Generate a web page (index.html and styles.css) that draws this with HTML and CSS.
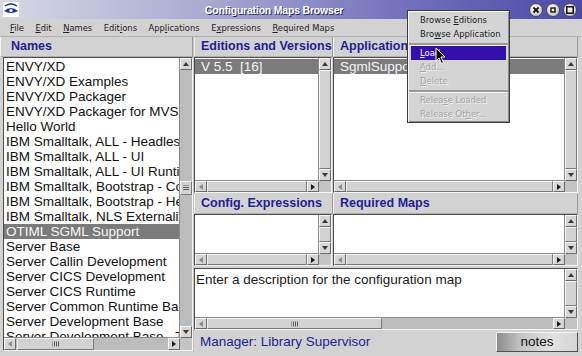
FILE: index.html
```html
<!DOCTYPE html>
<html lang="en">
<head>
    <meta charset="UTF-8">
    <title>Configuration Maps Browser</title>
    <link rel="stylesheet" href="styles.css">
</head>
<body>
    <div class="window">
        <div class="titlebar">
            <svg class="app-icon" width="16" height="15" viewBox="0 0 16 15">
                <rect x="0" y="0" width="16" height="15" fill="#ffffff"/>
                <path d="M2 4 Q8 0 14 4" stroke="#1c3a8c" stroke-width="1.4" fill="none"/>
                <path d="M1 9 Q8 3 15 9 Q8 13 1 9Z" fill="#1c3a8c"/>
                <circle cx="8" cy="8.5" r="1.6" fill="#ffffff"/>
            </svg>
            <div class="title">Configuration Maps Browser</div>
            <div class="winbtns">
                <span class="wbtn"><svg width="12" height="12" viewBox="0 0 12 12"><path d="M3.5 3.5 L8.5 8.5 M8.5 3.5 L3.5 8.5" stroke="#111" stroke-width="1.8"/></svg></span>
                <span class="wbtn"><svg width="12" height="12" viewBox="0 0 12 12"><rect x="4" y="4" width="4" height="4" fill="none" stroke="#111" stroke-width="1.4"/></svg></span>
                <span class="wbtn"><svg width="12" height="12" viewBox="0 0 12 12"><rect x="2.8" y="2.8" width="6.4" height="6.4" fill="none" stroke="#111" stroke-width="1.5"/></svg></span>
            </div>
        </div>

        <div class="menubar">
            <span><u>F</u>ile</span>
            <span><u>E</u>dit</span>
            <span><u>N</u>ames</span>
            <span>Edit<u>i</u>ons</span>
            <span>App<u>l</u>ications</span>
            <span>E<u>x</u>pressions</span>
            <span><u>R</u>equired Maps</span>
        </div>

        <div class="body">
            <div class="names">
                <div class="hdr">Names</div>
                <div class="pane">
                    <div class="list names-list">
                        <div class="row">ENVY/XD</div>
                        <div class="row">ENVY/XD Examples</div>
                        <div class="row">ENVY/XD Packager</div>
                        <div class="row">ENVY/XD Packager for MVS</div>
                        <div class="row">Hello World</div>
                        <div class="row">IBM Smalltalk, ALL - Headless</div>
                        <div class="row">IBM Smalltalk, ALL - UI</div>
                        <div class="row">IBM Smalltalk, ALL - UI Runtime</div>
                        <div class="row">IBM Smalltalk, Bootstrap - Common</div>
                        <div class="row">IBM Smalltalk, Bootstrap - Headless</div>
                        <div class="row">IBM Smalltalk, NLS Externalization</div>
                        <div class="row sel">OTIML SGML Support</div>
                        <div class="row">Server Base</div>
                        <div class="row">Server Callin Development</div>
                        <div class="row">Server CICS Development</div>
                        <div class="row">Server CICS Runtime</div>
                        <div class="row">Server Common Runtime Base</div>
                        <div class="row">Server Development Base</div>
                        <div class="row">Server Development Base - Tools</div>
                    </div>
                    <div class="vs">
                        <span class="btn up"></span>
                        <span class="trough"><span class="thumb grip" style="margin-top:111px;height:14px"></span></span>
                        <span class="btn down"></span>
                    </div>
                    <div class="hs">
                        <span class="btn left"></span>
                        <span class="trough"><span class="thumb grip" style="margin-left:1px;width:77px"></span></span>
                        <span class="btn right"></span>
                    </div>
                    <div class="corner"></div>
                </div>
            </div>

            <div class="sash"></div>

            <div class="right">
                <div class="hdr">Editions and Versions</div>
                <div class="hdr">Applications</div>

                <div class="pane gap-r">
                    <div class="list wide-pad">
                        <div class="row sel">V 5.5  [16]</div>
                    </div>
                    <div class="vs">
                        <span class="btn up"></span>
                        <span class="trough"><span class="thumb full"></span></span>
                        <span class="btn down"></span>
                    </div>
                    <div class="hs">
                        <span class="btn left"></span>
                        <span class="trough"><span class="thumb full"></span></span>
                        <span class="btn right"></span>
                    </div>
                    <div class="corner"></div>
                </div>
                <div class="pane">
                    <div class="list wide-pad">
                        <div class="row sel">SgmlSupport</div>
                    </div>
                    <div class="vs">
                        <span class="btn up"></span>
                        <span class="trough"><span class="thumb full"></span></span>
                        <span class="btn down"></span>
                    </div>
                    <div class="hs">
                        <span class="btn left"></span>
                        <span class="trough"><span class="thumb full"></span></span>
                        <span class="btn right"></span>
                    </div>
                    <div class="corner"></div>
                </div>

                <div class="hdr">Config. Expressions</div>
                <div class="hdr">Required Maps</div>

                <div class="pane gap-r">
                    <div class="list"></div>
                    <div class="vs">
                        <span class="btn up"></span>
                        <span class="trough"><span class="thumb full"></span></span>
                        <span class="btn down"></span>
                    </div>
                    <div class="hs">
                        <span class="btn left"></span>
                        <span class="trough"><span class="thumb full"></span></span>
                        <span class="btn right"></span>
                    </div>
                    <div class="corner"></div>
                </div>
                <div class="pane">
                    <div class="list"></div>
                    <div class="vs">
                        <span class="btn up"></span>
                        <span class="trough"><span class="thumb full"></span></span>
                        <span class="btn down"></span>
                    </div>
                    <div class="hs">
                        <span class="btn left"></span>
                        <span class="trough"><span class="thumb full"></span></span>
                        <span class="btn right"></span>
                    </div>
                    <div class="corner"></div>
                </div>

                <div class="pane desc">
                    <div class="list text">Enter a description for the configuration map</div>
                    <div class="vs">
                        <span class="btn up"></span>
                        <span class="trough"><span class="thumb full"></span></span>
                        <span class="btn down"></span>
                    </div>
                    <div class="hs">
                        <span class="btn left"></span>
                        <span class="trough"><span class="thumb grip" style="width:175px"></span></span>
                        <span class="btn right"></span>
                    </div>
                    <div class="corner"></div>
                </div>

                <div class="status">
                    <span class="mgr">Manager: Library Supervisor</span>
                    <span class="notes">notes</span>
                </div>
            </div>
        </div>

        <div class="popup">
            <div class="pitem">Browse <u>E</u>ditions</div>
            <div class="pitem">Bro<u>w</u>se Application</div>
            <div class="psep"></div>
            <div class="pitem hi"><u>L</u>oad</div>
            <div class="pitem off"><u>A</u>dd...</div>
            <div class="pitem off"><u>D</u>elete</div>
            <div class="psep"></div>
            <div class="pitem off">Relea<u>s</u>e Loaded</div>
            <div class="pitem off">Release Ot<u>h</u>er...</div>
        </div>

        <svg class="cursor" width="12" height="18" viewBox="0 0 12 18">
            <path d="M1 1 L1 14 L4 11 L6.5 16.5 L8.5 15.5 L6 10 L10 10 Z" fill="#000" stroke="#fff" stroke-width="1"/>
        </svg>
    </div>
</body>
</html>
```
FILE: styles.css
```css
* {
    box-sizing: border-box;
}

body {
    margin: 0;
    background-color: #d2d2d2;
    font-family: "Liberation Sans", Arial, sans-serif;
    color: #111;
}

.window {
    position: relative;
    width: 582px;
    height: 356px;
    display: grid;
    grid-template-rows: 19px 18px 1fr;
    padding-bottom: 4px;
    background-color: #d2d2d2;
    overflow: hidden;
}

/* title bar */
.titlebar {
    display: flex;
    align-items: center;
    background: linear-gradient(to right, #d6d8e4 0%, #aaaad2 35%, #7070bc 70%, #4a4aa8 100%);
}

.app-icon {
    margin-left: 3px;
    flex: none;
}

.title {
    flex: 1;
    text-align: center;
    color: #ffffff;
    font-weight: bold;
    font-size: 10.5px;
    letter-spacing: -0.2px;
    text-shadow: 1px 1px 0 #2c2c60;
}

.winbtns {
    display: flex;
    gap: 3px;
    margin-right: 5px;
    padding-top: 1px;
}

.wbtn {
    width: 14px;
    height: 14px;
    border-radius: 50%;
    border: 1px solid #4a4a4a;
    background: radial-gradient(circle at 40% 35%, #ffffff, #c8c8c8 70%, #9a9a9a);
    display: flex;
    align-items: center;
    justify-content: center;
}

/* menu bar */
.menubar {
    display: flex;
    align-items: center;
    gap: 11.5px;
    padding-left: 10px;
    font-family: "DejaVu Sans Condensed", "DejaVu Sans", sans-serif;
    font-size: 9.3px;
    color: #222;
    border-bottom: 1px solid #b4b4b4;
}

.menubar u, .popup u {
    text-underline-offset: 1px;
}

/* main area */
.body {
    display: grid;
    grid-template-columns: 193px 1px 1fr;
    padding-right: 4px;
    min-height: 0;
}

.names {
    display: grid;
    grid-template-rows: 20px 1fr;
    min-height: 0;
}

.names .hdr {
    padding-left: 10px;
}

.names .pane {
    margin-left: 3px;
    grid-template-rows: 1fr 12px;
}

.sash {
    background-color: #c4c4c4;
}

.right {
    display: grid;
    grid-template-columns: 139px 1fr;
    grid-template-rows: 20px 137px 20px 53px 63px 22px;
    min-height: 0;
}

.hdr {
    font-weight: bold;
    font-size: 12.5px;
    color: #1e1e96;
    line-height: 19px;
    padding-left: 6px;
    border-left: 1px solid #f2f2f2;
    border-right: 1px solid #9c9c9c;
    border-bottom: 1px solid #b0b0b0;
    white-space: nowrap;
    overflow: hidden;
}

/* list panes */
.pane {
    display: grid;
    grid-template-columns: 1fr 12px;
    grid-template-rows: 1fr 11px;
    border: 1px solid;
    border-color: #4c4c4c #f4f4f4 #f4f4f4 #4c4c4c;
    background-color: #c4c4c4;
    min-height: 0;
    overflow: hidden;
}

.gap-r {
    margin-right: 1px;
}

.pane:not(.desc) {
    margin-bottom: 1px;
}

.desc {
    grid-column: 1 / 3;
    margin-top: 1px;
}

.list {
    background-color: #ffffff;
    padding-top: 1px;
    font-size: 13.5px;
    overflow: hidden;
    border-right: 1px solid #8c8c8c;
    border-bottom: 1px solid #8c8c8c;
}

.row {
    height: 15px;
    line-height: 15px;
    padding-left: 2px;
    white-space: pre;
    overflow: hidden;
}

.wide-pad .row {
    padding-left: 6px;
}

.row.sel {
    background-color: #7b7b7b;
    color: #f6f6f6;
}

.text {
    padding: 3px 1px;
    line-height: 16px;
    color: #1a1a1a;
}

/* scroll bars */
.vs, .hs {
    display: flex;
    background-color: #bcbcbc;
}

.vs {
    flex-direction: column;
}

.trough {
    flex: 1;
    display: flex;
    flex-direction: inherit;
}

.btn {
    position: relative;
    flex: none;
    background-color: #d6d6d6;
    border: 1px solid;
    border-color: #f8f8f8 #6a6a6a #6a6a6a #f8f8f8;
}

.vs .btn {
    height: 12px;
}

.hs .btn {
    width: 12px;
}

.btn::after {
    content: "";
    position: absolute;
    left: 50%;
    top: 50%;
    transform: translate(-50%, -50%);
    border: 3px solid transparent;
}

.btn.up::after {
    border-top-width: 0;
    border-bottom: 4px solid #3a3a3a;
}

.btn.down::after {
    border-bottom-width: 0;
    border-top: 4px solid #3a3a3a;
}

.btn.left::after {
    border-left-width: 0;
    border-right: 4px solid #8a8a8a;
}

.btn.right::after {
    border-right-width: 0;
    border-left: 4px solid #1a1a1a;
}

.thumb {
    position: relative;
    flex: none;
    background-color: #d2d2d2;
    border: 1px solid;
    border-color: #f4f4f4 #7a7a7a #7a7a7a #f4f4f4;
}

.thumb.full {
    flex: 1;
}

.grip::after {
    content: "";
    position: absolute;
    left: 50%;
    top: 50%;
    transform: translate(-50%, -50%);
}

.vs .grip::after {
    width: 6px;
    height: 5px;
    background: repeating-linear-gradient(to bottom, #5a5a5a 0 1px, transparent 1px 2px);
}

.hs .grip::after {
    width: 7px;
    height: 5px;
    background: repeating-linear-gradient(to right, #5a5a5a 0 1px, transparent 1px 2px);
}

.corner {
    background-color: #c4c4c4;
}

/* status line */
.status {
    grid-column: 1 / 3;
    display: flex;
    align-items: center;
    justify-content: space-between;
    padding-top: 1px;
}

.mgr {
    padding-left: 6px;
    font-size: 13.5px;
    color: #1e1e96;
}

.notes {
    width: 82px;
    height: 20px;
    line-height: 18px;
    text-align: center;
    font-size: 13.5px;
    color: #111;
    border: 1px solid;
    border-color: #f4f4f4 #505050 #505050 #f4f4f4;
    background: linear-gradient(to right, #8c8c8c 0%, #c4c4c4 30%, #e2e2e2 70%, #d4d4d4 100%);
}

/* popup menu */
.popup {
    position: absolute;
    left: 407px;
    top: 10px;
    width: 103px;
    padding: 2px 3px 1px;
    background-color: #d4d4d4;
    border: 1px solid #3c3c3c;
    box-shadow: inset 1px 1px 0 #f6f6f6, inset -1px -1px 0 #8c8c8c;
    font-family: "DejaVu Sans Condensed", "DejaVu Sans", sans-serif;
    font-size: 9.4px;
}

.pitem {
    height: 14px;
    line-height: 14px;
    padding-left: 9px;
    color: #222;
    white-space: nowrap;
}

.pitem.hi {
    background-color: #3410aa;
    color: #ffffff;
}

.pitem.off {
    color: #a6a6a6;
    text-shadow: 1px 1px 0 #f0f0f0;
}

.psep {
    height: 5px;
    margin: 0 -2px;
    border-top: 2px solid #d4d4d4;
    border-bottom: 1px solid #f4f4f4;
    background-color: #9a9a9a;
    background-clip: content-box;
}

.cursor {
    position: absolute;
    left: 435px;
    top: 47px;
}
```
